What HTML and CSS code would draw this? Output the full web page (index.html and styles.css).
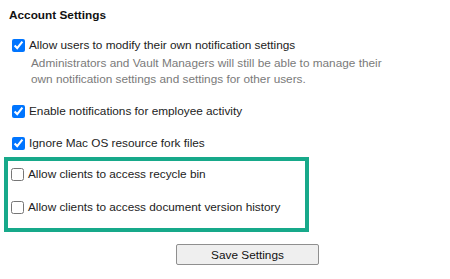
FILE: index.html
```html
<!DOCTYPE html>
<html lang="en">
<head>
  <meta charset="UTF-8" />
  <title>Account Settings</title>
  <link rel="stylesheet" href="styles.css">
</head>
<body>
  <div class="settings">
    <h3 class="settings-title">Account Settings</h3>

    <label class="option">
      <input type="checkbox" checked>
      <span>Allow users to modify their own notification settings</span>
    </label>
    <p class="option-note">
      Administrators and Vault Managers will still be able to manage their<br>
      own notification settings and settings for other users.
    </p>

    <label class="option">
      <input type="checkbox" checked>
      <span>Enable notifications for employee activity</span>
    </label>

    <label class="option">
      <input type="checkbox" checked>
      <span>Ignore Mac OS resource fork files</span>
    </label>

    <!-- Highlighted client options -->
    <div class="highlight">
      <label class="option">
        <input type="checkbox">
        <span>Allow clients to access recycle bin</span>
      </label>
      <label class="option">
        <input type="checkbox">
        <span>Allow clients to access document version history</span>
      </label>
    </div>

    <div class="actions">
      <button class="save-btn">Save Settings</button>
    </div>
  </div>
</body>
</html>
```

FILE: styles.css
```css
* {
  box-sizing: border-box;
}

body {
  margin: 0;
  font-family: 'Liberation Sans', Arial, sans-serif;
  font-size: 11.8px;
  color: #222;
  background: #fff;
}

.settings {
  padding: 7px 0 0 4px;
}

.settings-title {
  margin: 0 0 6px 5px;
  font-size: 11.8px;
  font-weight: bold;
  color: #111;
  line-height: 16px;
}

.option {
  display: flex;
  align-items: center;
  height: 32px;
  padding-left: 4px;
  white-space: nowrap;
}

.option input {
  margin: 0 4px 0 4px;
  width: 13px;
  height: 13px;
  flex: none;
}

.option-note {
  margin: -6px 0 8px 27px;
  color: #7a7a7a;
  line-height: 16px;
  white-space: nowrap;
}

.highlight {
  display: flex;
  flex-direction: column;
  gap: 7px;
  border: 4px solid #17a98a;
  width: 305px;
  padding: 0 0 8px 0;
  margin-top: -2px;
}

.highlight .option {
  height: 26px;
  padding-left: 0;
  margin-left: -1px;
}

.actions {
  display: flex;
  justify-content: flex-end;
  padding-top: 12px;
  width: 315px;
}

.save-btn {
  width: 143px;
  height: 21px;
  font-family: 'Liberation Sans', Arial, sans-serif;
  font-size: 11.8px;
  color: #111;
  background: #efefef;
  border: 1px solid #8f8f8f;
  border-radius: 2px;
}
```
